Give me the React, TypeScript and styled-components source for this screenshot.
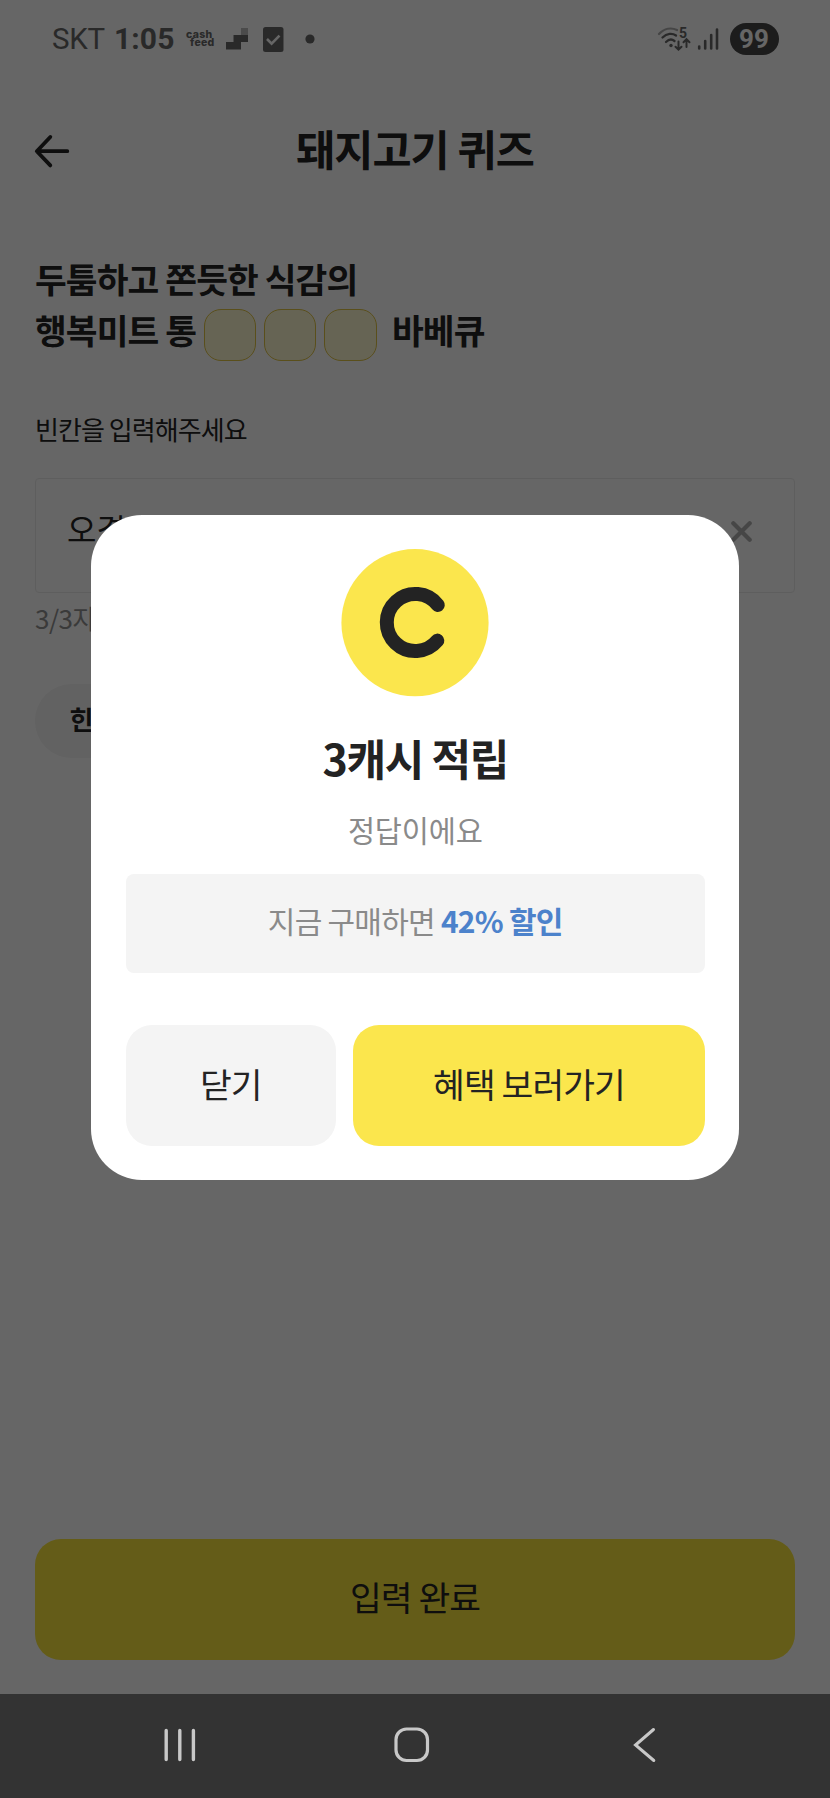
import React from "react";
import styled, { createGlobalStyle } from "styled-components";

const GlobalStyle = createGlobalStyle`
  * { box-sizing: border-box; }
  body { margin: 0; background: #fff; }
  button { border: 0; margin: 0; padding: 0; background: none; font: inherit; color: inherit; }
  svg { display: block; flex: none; }
`;

const Screen = styled.div`
  position: relative;
  width: 830px;
  height: 1798px;
  display: flex;
  flex-direction: column;
  overflow: hidden;
  font-family: "Noto Sans CJK KR", "Noto Sans", sans-serif;
  color: #232323;
  background: #fff;
  white-space: nowrap;
`;

const StatusBar = styled.div`
  height: 78px;
  flex: none;
  padding: 0 51.5px 0 52px;
  display: flex;
  align-items: center;
  justify-content: space-between;
  font-family: Roboto, sans-serif;
  color: #686868;
`;

const StatusGroup = styled.div`
  display: flex;
  align-items: center;
`;

const Carrier = styled.span`
  width: 62px;
  font-size: 29.5px;
  line-height: 36px;
  letter-spacing: -0.3px;
`;

const Clock = styled.span`
  width: 72px;
  font-size: 30px;
  line-height: 36px;
  font-weight: 700;
  letter-spacing: 0.1px;
`;

const CashFeed = styled.span`
  width: 40px;
  display: flex;
  flex-direction: column;
  font-family: Inter, sans-serif;
  font-size: 10.5px;
  line-height: 8.5px;
  font-weight: 800;
  letter-spacing: 0.3px;
  span + span { padding-left: 4px; }
`;

const Battery = styled.span`
  width: 49px;
  height: 32px;
  margin-left: 11px;
  border-radius: 16px;
  background: #484848;
  color: #fff;
  font-size: 26px;
  line-height: 32px;
  font-weight: 700;
  text-align: center;
`;

const Header = styled.header`
  height: 146px;
  flex: none;
  padding: 0 33px;
  display: grid;
  grid-template-columns: 40px 1fr 40px;
  align-items: center;
`;

const Title = styled.h1`
  margin: 0;
  padding-bottom: 6px;
  font-size: 42.5px;
  line-height: 60px;
  font-weight: 700;
  letter-spacing: -0.9px;
  text-align: center;
`;

const Content = styled.main`
  flex: 1;
  padding: 29px 35px 34px;
  display: flex;
  flex-direction: column;
`;

const Question = styled.h2`
  margin: 0 0 55px;
  font-size: 34.5px;
  line-height: 51px;
  font-weight: 700;
  letter-spacing: -0.9px;
`;

const QuestionLine = styled.div`
  height: 51px;
  display: flex;
  align-items: center;
`;

const Blanks = styled.span`
  display: flex;
  gap: 8px;
  margin: 11px 15.5px 0 7.5px;
`;

const Blank = styled.span`
  width: 52.3px;
  height: 52px;
  border: 1.5px solid #e0c545;
  border-radius: 17px;
  background: #fff9d2;
`;

const Label = styled.label`
  margin-bottom: 31px;
  font-size: 26px;
  line-height: 37px;
  letter-spacing: -0.95px;
`;

const Field = styled.div`
  height: 115px;
  flex: none;
  padding: 0 42px 15px 31px;
  border: 1.5px solid #ebebeb;
  border-radius: 4px;
  display: flex;
  align-items: center;
  justify-content: space-between;
  font-size: 32px;
  svg { margin-top: 7px; }
`;

const Counter = styled.div`
  margin-top: 7px;
  font-size: 26px;
  line-height: 36px;
  letter-spacing: -0.5px;
  color: #929292;
`;

const Hint = styled.button`
  width: 128px;
  height: 74px;
  flex: none;
  margin-top: 48px;
  padding: 0 0 5px 34.5px;
  border-radius: 37px;
  background: #f4f4f4;
  font-size: 26px;
  font-weight: 700;
  text-align: left;
`;

const Button = styled.button<{ $tone: "yellow" | "deep" | "grey"; $width?: string }>`
  width: ${(p) => p.$width ?? "100%"};
  height: 121px;
  flex: none;
  padding-bottom: 6px;
  border-radius: 26px;
  background: ${(p) => ({ yellow: "#fbe64d", deep: "#fae63d", grey: "#f4f4f4" })[p.$tone]};
  font-size: 34.5px;
  letter-spacing: -0.9px;
  text-align: center;
`;

const Submit = styled(Button)`
  margin-top: auto;
  padding-bottom: 7px;
`;

const Dim = styled.div`
  position: absolute;
  inset: 0 0 104px;
  background: rgba(0, 0, 0, 0.6);
`;

const Modal = styled.section`
  position: absolute;
  left: 91px;
  top: 515px;
  width: 648px;
  height: 665px;
  padding: 34px 34px 34px 34.5px;
  border-radius: 51px;
  background: #fff;
  display: flex;
  flex-direction: column;
  align-items: center;
`;

const Reward = styled.h3`
  margin: 29px 0 0;
  font-size: 43px;
  line-height: 62px;
  font-weight: 700;
  letter-spacing: -1.3px;
`;

const Result = styled.p`
  margin: 20px 0 0;
  font-size: 29.5px;
  line-height: 42px;
  letter-spacing: -0.2px;
  color: #8a8a8a;
`;

const Offer = styled.div`
  width: 100%;
  height: 99px;
  margin-top: 24px;
  padding-bottom: 7px;
  border-radius: 8px;
  background: #f4f4f4;
  display: flex;
  align-items: center;
  justify-content: center;
  gap: 6px;
  font-size: 30px;
  letter-spacing: -0.75px;
  color: #8a8a8a;
  strong { color: #4c82cb; }
`;

const Actions = styled.div`
  width: 100%;
  margin-top: auto;
  display: flex;
  justify-content: space-between;
`;

const NavBar = styled.nav`
  height: 104px;
  flex: none;
  padding: 0 173px 2px 162px;
  background: #333;
  display: flex;
  align-items: center;
  gap: 196px;
`;

const BackArrow = () => (
  <svg width="38" height="36" viewBox="0 0 38 36" fill="none" stroke="#232323" strokeWidth="3.8" strokeLinecap="round" strokeLinejoin="round">
    <path d="M34.3 18.2H4M17.3 4L3.8 18.2L17.3 32.4" />
  </svg>
);

const Steps = () => (
  <svg width="23" height="22" viewBox="0 0 23 22" fill="currentColor">
    <path d="M0 14H7.5V7H22V14H15V21.5H0z" />
    <path d="M15 0H22V7H15z" opacity="0.45" />
  </svg>
);

const Check = () => (
  <svg width="21" height="25" viewBox="0 0 21 25" style={{ marginLeft: 14 }}>
    <rect width="20.5" height="25" rx="2.5" fill="#686868" />
    <path d="M4 12l4.6 4.6L16.5 8.7" fill="none" stroke="#fff" strokeWidth="2.6" />
  </svg>
);

const Dot = () => (
  <svg width="10" height="10" viewBox="0 0 10 10" style={{ marginLeft: 21 }}>
    <circle cx="5" cy="5" r="4.6" fill="currentColor" />
  </svg>
);

const Wifi = () => (
  <svg width="36" height="26" viewBox="0 0 36 26" fill="none" stroke="currentColor" strokeWidth="2.3" strokeLinecap="round">
    <path d="M2 8C7.5 2 14.5 1.5 20 4" opacity="0.55" />
    <path d="M5.5 11.5C10 7 15.5 7 19 9.5" />
    <path d="M9 16C12 13 15 13 17.5 15" />
    <circle cx="14" cy="19.5" r="1.7" fill="currentColor" stroke="none" />
    <path d="M21.5 15.5V23.5M18.5 20.7L21.5 23.7L24.5 20.7M29.5 21V13.5M26.5 16.2L29.5 13.2L32.5 16.2" strokeWidth="2" />
    <text x="22" y="11.5" fontFamily="Roboto" fontSize="14" fontWeight="700" fill="currentColor" stroke="none">5</text>
  </svg>
);

const Signal = () => (
  <svg width="22" height="24" viewBox="0 0 22 24" fill="none" stroke="currentColor" strokeWidth="2.6" strokeLinecap="round" style={{ marginLeft: 4 }}>
    <path d="M2.2 19.5V21.5M8.2 14V21.5M14.2 8V21.5M20 2.5V21.5" />
  </svg>
);

const Clear = () => (
  <svg width="21" height="21" viewBox="0 0 21 21" stroke="#aeaeae" strokeWidth="4.2" strokeLinecap="round">
    <path d="M2.3 2.3L18.7 18.7M18.7 2.3L2.3 18.7" />
  </svg>
);

const Coin = () => (
  <svg width="148" height="148" viewBox="0 0 148 148">
    <circle cx="74" cy="73.7" r="73.6" fill="#fbe64d" />
    <path d="M96.8 56A28.5 28.5 0 1 0 96.3 91.6" fill="none" stroke="#232323" strokeWidth="14" strokeLinecap="round" />
  </svg>
);

const Recents = () => (
  <svg width="36" height="36" viewBox="0 0 36 36" stroke="#c8c8c8" strokeWidth="3.4" strokeLinecap="round">
    <path d="M4.2 3.5V32.5M17.8 3.5V32.5M31.4 3.5V32.5" />
  </svg>
);

const Home = () => (
  <svg width="36" height="36" viewBox="0 0 36 36" fill="none" stroke="#c8c8c8" strokeWidth="3.2">
    <rect x="2" y="2" width="31.5" height="31.5" rx="10.5" />
  </svg>
);

const Back = () => (
  <svg width="25" height="36" viewBox="0 0 25 36" fill="none" stroke="#c8c8c8" strokeWidth="3" strokeLinecap="round" style={{ marginLeft: "auto" }}>
    <path d="M21.5 2.5L3.5 18L21.8 33.5" />
  </svg>
);

export default function App() {
  return (
    <>
      <GlobalStyle />
      <Screen>
        <StatusBar>
          <StatusGroup>
            <Carrier>SKT</Carrier>
            <Clock>1:05</Clock>
            <CashFeed>
              <span>cash</span>
              <span>feed</span>
            </CashFeed>
            <Steps />
            <Check />
            <Dot />
          </StatusGroup>
          <StatusGroup>
            <Wifi />
            <Signal />
            <Battery>99</Battery>
          </StatusGroup>
        </StatusBar>
        <Header>
          <BackArrow />
          <Title>돼지고기 퀴즈</Title>
        </Header>
        <Content>
          <Question>
            <QuestionLine>두툼하고 쫀듯한 식감의</QuestionLine>
            <QuestionLine>
              행복미트 통
              <Blanks>
                <Blank />
                <Blank />
                <Blank />
              </Blanks>
              바베큐
            </QuestionLine>
          </Question>
          <Label>빈칸을 입력해주세요</Label>
          <Field>
            <span>오겹살</span>
            <Clear />
          </Field>
          <Counter>3/3자</Counter>
          <Hint>힌트</Hint>
          <Submit $tone="deep">입력 완료</Submit>
        </Content>
        <NavBar>
          <Recents />
          <Home />
          <Back />
        </NavBar>
        <Dim />
        <Modal>
          <Coin />
          <Reward>3캐시 적립</Reward>
          <Result>정답이에요</Result>
          <Offer>
            <span>지금 구매하면</span>
            <strong>42% 할인</strong>
          </Offer>
          <Actions>
            <Button $tone="grey" $width="210.5px">닫기</Button>
            <Button $tone="yellow" $width="352px">혜택 보러가기</Button>
          </Actions>
        </Modal>
      </Screen>
    </>
  );
}
